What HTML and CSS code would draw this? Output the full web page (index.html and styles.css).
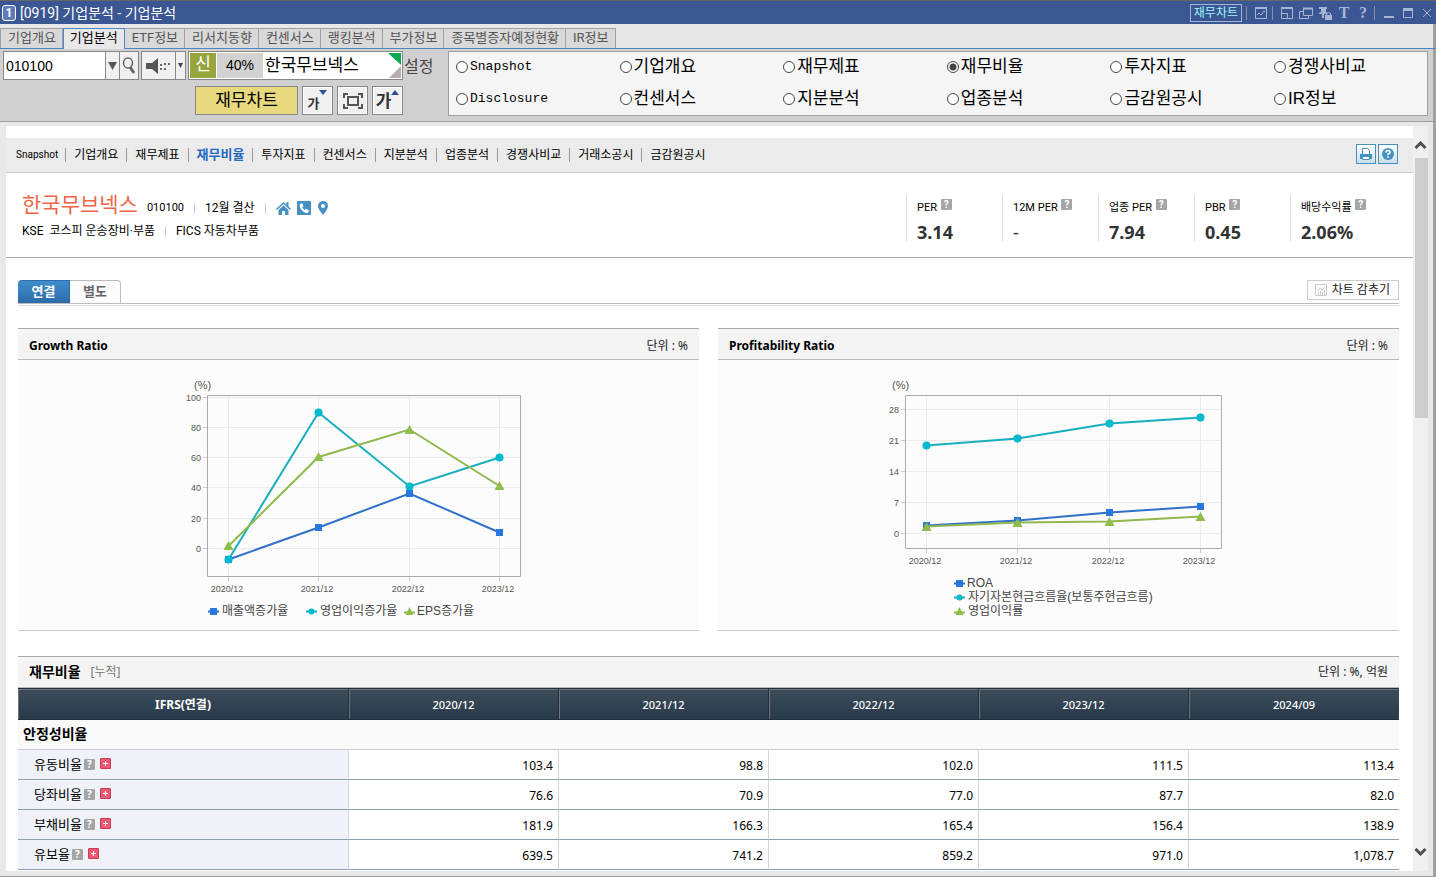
FILE: index.html
```
<!DOCTYPE html>
<html lang="ko">
<head>
    <meta charset="UTF-8">
    <meta name="viewport" content="width=device-width, initial-scale=1.0">
    <title>[0919] 기업분석 - 기업분석</title>
    <link rel="stylesheet" href="styles.css">
</head>
<body>
    <header class="titlebar">
        <span class="win-no">1</span>
        <h1>[0919] 기업분석 - 기업분석</h1>
        <div class="win-tools">
            <button class="chart-link" type="button">재무차트</button>
            <i class="bar"></i>
            <button type="button" aria-label="차트"><svg viewBox="0 0 14 14"><path d="M1.500 2v10.500h11v-10.500" /><path d="M1 2h12" stroke-width="2"/><path d="M3 9l2-2 2 2 3-4 1 1"/></svg></button>
            <i class="bar"></i>
            <button type="button" aria-label="화면 크기"><svg viewBox="0 0 14 14"><path d="M1.500 2v10.500h11v-10.500M2 7.500h5.500v5"/><path d="M1 2h12" stroke-width="2"/></svg></button>
            <button type="button" aria-label="화면 복사"><svg viewBox="0 0 14 14"><path d="M4.500 2.500h9v7h-9zM4 5.500h-3.500v7h9v-3"/><path d="M4 2.500h10" stroke-width="2"/></svg></button>
            <button type="button" aria-label="고정"><svg viewBox="0 0 14 14"><path class="fill" d="M1 1h8v2h-1v3l2 2H6v4H4V8H1V7l2-1V3H1zM7 9h7v5H7z"/><path d="M8.500 9V7.500q2-2 4 0V9"/></svg></button>
            <button type="button" class="glyph" aria-label="글꼴">T</button>
            <button type="button" class="glyph" aria-label="도움말">?</button>
            <i class="bar"></i>
            <button type="button" aria-label="최소화"><svg viewBox="0 0 14 14"><path d="M2 11h10" stroke-width="2"/></svg></button>
            <button type="button" aria-label="최대화"><svg viewBox="0 0 14 14"><path d="M2.500 3v8.500h9v-8.500"/><path d="M2 3.500h10" stroke-width="3"/></svg></button>
            <button type="button" aria-label="닫기"><svg viewBox="0 0 14 14"><path d="M3 3l8 8M11 3l-8 8"/></svg></button>
        </div>
    </header>

    <nav class="tabs">
        <a href="#">기업개요</a>
        <a href="#" class="on">기업분석</a>
        <a href="#">ETF정보</a>
        <a href="#">리서치동향</a>
        <a href="#">컨센서스</a>
        <a href="#">랭킹분석</a>
        <a href="#">부가정보</a>
        <a href="#">종목별증자예정현황</a>
        <a href="#">IR정보</a>
    </nav>

    <section class="toolbar">
        <div class="stock">
            <div class="stock-row">
                <div class="code-box">
                    <input type="text" value="010100" aria-label="종목코드">
                    <button type="button" class="drop" aria-label="종목 목록"><svg width="9" height="8" viewBox="0 0 9 8"><path d="M0 0h9L4.500 8z" fill="#555"/></svg></button>
                    <button type="button" class="find" aria-label="검색"><svg width="14" height="18" viewBox="0 0 14 18"><ellipse cx="6" cy="6" rx="4.500" ry="5" fill="none" stroke="#666" stroke-width="1.500"/><path d="M8 10l4 6" stroke="#666" stroke-width="3"/></svg></button>
                </div>
                <div class="sound">
                    <button type="button" aria-label="음성"><svg width="28" height="18" viewBox="0 0 28 18"><path d="M1 6h6l6-5v16l-6-5H1z" fill="#555"/><path d="M15 7h2v2h-2zM15 11h2v2h-2zM19 6h2v2h-2zM19 11h2v2h-2zM23 6h2v2h-2z" fill="#666"/></svg></button>
                    <button type="button" class="mini" aria-label="음성 설정"><svg width="5" height="5" viewBox="0 0 5 5"><path d="M0 0h5L2.500 5z" fill="#444"/></svg></button>
                </div>
                <div class="name-box">
                    <span class="credit">신</span>
                    <span class="rate">40%</span>
                    <span class="stock-name">한국무브넥스</span>
                    <svg width="13" height="25" viewBox="0 0 13 25"><path d="M0 0h13v12z" fill="#0aa850"/><path d="M13 13v12H1z" fill="#b5b0ae"/></svg>
                </div>
                <span class="setup">설정</span>
            </div>
            <div class="stock-row second">
                <button type="button" class="fin-chart">재무차트</button>
                <button type="button" class="sq small">가<svg width="8" height="5" viewBox="0 0 8 5"><path d="M0 0h8L4 5z" fill="#2d4f98"/></svg></button>
                <button type="button" class="sq" aria-label="화면 맞춤"><svg width="20" height="16" viewBox="0 0 20 16" fill="none" stroke="#555" stroke-width="2"><path d="M5 4h10v8H5zM1 5V1h4M15 1h4v4M19 11v4h-4M5 15H1v-4"/></svg></button>
                <button type="button" class="sq big">가<svg width="8" height="5" viewBox="0 0 8 5"><path d="M0 5h8L4 0z" fill="#2d4f98"/></svg></button>
            </div>
        </div>
        <div class="menu-box">
            <label class="latin"><input type="radio" name="menu">Snapshot</label>
            <label><input type="radio" name="menu">기업개요</label>
            <label><input type="radio" name="menu">재무제표</label>
            <label><input type="radio" name="menu" checked>재무비율</label>
            <label><input type="radio" name="menu">투자지표</label>
            <label><input type="radio" name="menu">경쟁사비교</label>
            <label class="latin"><input type="radio" name="menu">Disclosure</label>
            <label><input type="radio" name="menu">컨센서스</label>
            <label><input type="radio" name="menu">지분분석</label>
            <label><input type="radio" name="menu">업종분석</label>
            <label><input type="radio" name="menu">금감원공시</label>
            <label><input type="radio" name="menu">IR정보</label>
        </div>
    </section>

    <div class="viewer">
        <main class="page">
            <div class="gnb">
                <nav>
                    <a href="#" class="latin">Snapshot</a>
                    <a href="#">기업개요</a>
                    <a href="#">재무제표</a>
                    <a href="#" class="on">재무비율</a>
                    <a href="#">투자지표</a>
                    <a href="#">컨센서스</a>
                    <a href="#">지분분석</a>
                    <a href="#">업종분석</a>
                    <a href="#">경쟁사비교</a>
                    <a href="#">거래소공시</a>
                    <a href="#">금감원공시</a>
                </nav>
                <button type="button" aria-label="인쇄"><svg width="14" height="14" viewBox="0 0 14 14"><path d="M3.500 7V1.500h5l2 2V7" fill="#fff" stroke="#4690c2"/><path d="M1 7h12v5h-2v-2H3v2H1z" fill="#4690c2"/><path d="M3.500 9.500h7v3h-7z" fill="#fff" stroke="#4690c2"/></svg></button>
                <button type="button" aria-label="도움말"><svg width="14" height="14" viewBox="0 0 14 14"><circle cx="7" cy="7" r="6" fill="#4690c2"/><path d="M5 5.500q0-2 2-2t2 1.700q0 1-2 2v1M7 9.500v1.500" fill="none" stroke="#fff" stroke-width="1.600"/></svg></button>
            </div>

            <section class="company">
                <div class="company-info">
                    <div class="line1">
                        <h2>한국무브넥스</h2>
                        <span class="code">010100</span>
                        <i class="bar"></i>
                        <span class="month">12월 결산</span>
                        <i class="bar"></i>
                        <a href="#" aria-label="홈페이지"><svg width="15" height="14" viewBox="0 0 15 14" fill="#4690c2"><path d="M0 8l7.500-7 3 2.800V1h2v4.500L15 8l-1 1-6.500-6L1 9z"/><path d="M2.500 9l5-4.500 5 4.500v5H9v-4H6v4H2.500z"/></svg></a>
                        <a href="#" aria-label="전화"><svg width="14" height="14" viewBox="0 0 14 14"><rect width="14" height="14" rx="1" fill="#4690c2"/><path d="M3 3l2-1 1.500 3-1.200 1.200q1 2 2.600 2.800L9 7.700 12 9.500 11 12q-3 .5-6-2.500T3 3z" fill="#fff"/></svg></a>
                        <a href="#" aria-label="위치"><svg width="12" height="14" viewBox="1 0 12 14"><path d="M7 0a5 5 0 0 1 5 5q0 3-5 9Q2 8 2 5a5 5 0 0 1 5-5z" fill="#4690c2"/><circle cx="7" cy="5" r="2" fill="#fff"/></svg></a>
                    </div>
                    <div class="line2">
                        <span class="market">KSE</span>
                        <span>코스피 운송장비·부품</span>
                        <i class="bar"></i>
                        <span>FICS 자동차부품</span>
                    </div>
                </div>
                <dl class="metrics">
                    <div><dt>PER <i class="q">?</i></dt><dd>3.14</dd></div>
                    <div><dt>12M PER <i class="q">?</i></dt><dd class="none">-</dd></div>
                    <div><dt>업종 PER <i class="q">?</i></dt><dd>7.94</dd></div>
                    <div><dt>PBR <i class="q">?</i></dt><dd>0.45</dd></div>
                    <div><dt>배당수익률 <i class="q">?</i></dt><dd>2.06%</dd></div>
                </dl>
            </section>

            <div class="content">
                <div class="basis">
                    <button type="button" class="basis-tab on">연결</button>
                    <button type="button" class="basis-tab">별도</button>
                    <button type="button" class="hide-chart"><svg width="12" height="12" viewBox="0 0 12 12" fill="none" stroke="#ccc"><path d="M.5.500h11v11H.500zM2 7l3-3 2 2 3-3M3.500 8v3M5.500 7v4M7.500 8v3M9.500 6v5"/></svg>차트 감추기</button>
                </div>

                <div class="cards">
                    <section class="card">
                        <div class="card-head"><h3>Growth Ratio</h3><span>단위 : %</span></div>
                        <svg class="chart" width="361" height="270" viewBox="0 0 361 270">
                            <path class="grid" d="M30 37.500h312M30 67.500h312M30 97.500h312M30 127.500h312M30 158.500h312M30 188.500h312M50.500 36v180M140.500 36v180M231.500 36v180M321.500 36v180"/>
                            <path class="frame" d="M29.500 35.500h313v181h-313z"/>
                            <path class="tick" d="M25 37.500h4M25 67.500h4M25 97.500h4M25 127.500h4M25 158.500h4M25 188.500h4M50.500 217v4M140.500 217v4M231.500 217v4M321.500 217v4"/>
                            <g class="axis-y"><text x="23" y="41">100</text><text x="23" y="71">80</text><text x="23" y="101">60</text><text x="23" y="131">40</text><text x="23" y="162">20</text><text x="23" y="192">0</text></g>
                            <g class="axis-x"><text x="49" y="232">2020/12</text><text x="139" y="232">2021/12</text><text x="230" y="232">2022/12</text><text x="320" y="232">2023/12</text></g>
                            <text class="unit" x="16" y="29">(%)</text>
                            <g class="blue">
                                <path d="M50.500 199.500L140.500 167.500 231.500 133.500 321.500 172.500M30 251.500h11"/>
                                <path class="dot" d="M47 196h7v7h-7zM137 164h7v7h-7zM228 130h7v7h-7zM318 169h7v7h-7zM32 248h7v7h-7z"/>
                            </g>
                            <g class="cyan">
                                <path d="M50.500 199.500L140.500 52.500 231.500 126.500 321.500 97.500M128 251.500h11"/>
                                <g class="dot"><circle cx="50.500" cy="199.500" r="4"/><circle cx="140.500" cy="52.500" r="4"/><circle cx="231.500" cy="126.500" r="4"/><circle cx="321.500" cy="97.500" r="4"/><circle cx="133.500" cy="251.500" r="3"/></g>
                            </g>
                            <g class="green">
                                <path d="M50.500 186L140.500 97 231.500 69.500 321.500 126M226 252.500h11"/>
                                <path class="dot" d="M50.500 181l5 9h-10zM140.500 92l5 9h-10zM231.500 65l5 9h-10zM321.500 121l5 9h-10zM231.500 247l4 8h-8z"/>
                            </g>
                            <g class="legend"><text x="44" y="255">매출액증가율</text><text x="142" y="255">영업이익증가율</text><text x="239" y="255">EPS증가율</text></g>
                        </svg>
                    </section>
                    <section class="card">
                        <div class="card-head"><h3>Profitability Ratio</h3><span>단위 : %</span></div>
                        <svg class="chart" width="361" height="270" viewBox="0 0 361 270">
                            <path class="grid" d="M28 49.500h315M28 80.500h315M28 111.500h315M28 142.500h315M28 173.500h315M48.500 36v152M139.500 36v152M231.500 36v152M322.500 36v152"/>
                            <path class="frame" d="M27.500 35.500h316v153h-316z"/>
                            <path class="tick" d="M23 49.500h4M23 80.500h4M23 111.500h4M23 142.500h4M23 173.500h4M48.500 189v4M139.500 189v4M231.500 189v4M322.500 189v4"/>
                            <g class="axis-y"><text x="21" y="53">28</text><text x="21" y="84">21</text><text x="21" y="115">14</text><text x="21" y="146">7</text><text x="21" y="177">0</text></g>
                            <g class="axis-x"><text x="47" y="204">2020/12</text><text x="138" y="204">2021/12</text><text x="230" y="204">2022/12</text><text x="321" y="204">2023/12</text></g>
                            <text class="unit" x="14" y="29">(%)</text>
                            <g class="blue">
                                <path d="M48.500 165.500L139.500 160.500 231.500 152.500 322.500 146.500M76 223.500h11"/>
                                <path class="dot" d="M45 162h7v7h-7zM136 157h7v7h-7zM228 149h7v7h-7zM319 143h7v7h-7zM78 220h7v7h-7z"/>
                            </g>
                            <g class="cyan">
                                <path d="M48.500 85.500L139.500 78.500 231.500 63.500 322.500 57.500M76 237.500h11"/>
                                <g class="dot"><circle cx="48.500" cy="85.500" r="4"/><circle cx="139.500" cy="78.500" r="4"/><circle cx="231.500" cy="63.500" r="4"/><circle cx="322.500" cy="57.500" r="4"/><circle cx="81.500" cy="237.500" r="3"/></g>
                            </g>
                            <g class="green">
                                <path d="M48.500 166.500L139.500 162.500 231.500 161.500 322.500 156.500M76 252.500h11"/>
                                <path class="dot" d="M48.500 162l5 9h-10zM139.500 158l5 9h-10zM231.500 157l5 9h-10zM322.500 152l5 9h-10zM81.500 247l4 8h-8z"/>
                            </g>
                            <g class="legend"><text x="89" y="227">ROA</text><text x="90" y="241">자기자본현금흐름율(보통주현금흐름)</text><text x="90" y="255">영업이익률</text></g>
                        </svg>
                    </section>
                </div>

                <section class="ratio">
                    <div class="card-head"><h3>재무비율</h3><em>[누적]</em><span>단위 : %, 억원</span></div>
                    <table>
                        <thead>
                            <tr><th class="first">IFRS(연결)</th><th>2020/12</th><th>2021/12</th><th>2022/12</th><th>2023/12</th><th>2024/09</th></tr>
                        </thead>
                        <tbody>
                            <tr class="group"><th colspan="6">안정성비율</th></tr>
                            <tr><th>유동비율<i class="q">?</i><button type="button" class="plus" aria-label="펼치기"></button></th><td>103.4</td><td>98.8</td><td>102.0</td><td>111.5</td><td>113.4</td></tr>
                            <tr><th>당좌비율<i class="q">?</i><button type="button" class="plus" aria-label="펼치기"></button></th><td>76.6</td><td>70.9</td><td>77.0</td><td>87.7</td><td>82.0</td></tr>
                            <tr><th>부채비율<i class="q">?</i><button type="button" class="plus" aria-label="펼치기"></button></th><td>181.9</td><td>166.3</td><td>165.4</td><td>156.4</td><td>138.9</td></tr>
                            <tr><th>유보율<i class="q">?</i><button type="button" class="plus" aria-label="펼치기"></button></th><td>639.5</td><td>741.2</td><td>859.2</td><td>971.0</td><td>1,078.7</td></tr>
                        </tbody>
                    </table>
                </section>
            </div>
        </main>
        <div class="scrollbar">
            <svg width="13" height="8" viewBox="0 0 13 8"><path d="M1.500 7l5-5 5 5" fill="none" stroke="#505050" stroke-width="3"/></svg>
            <div class="thumb"></div>
            <svg width="13" height="8" viewBox="0 0 13 8"><path d="M1.500 1l5 5 5-5" fill="none" stroke="#505050" stroke-width="3"/></svg>
        </div>
    </div>
</body>
</html>
```
FILE: styles.css
```
* {
    margin: 0;
    padding: 0;
    box-sizing: border-box;
}

body {
    display: flex;
    flex-direction: column;
    height: 100vh;
    overflow: hidden;
    background: #e8e8e8;
    border-bottom: 1px solid #a0a0a0;
    font-family: "Noto Sans", "Noto Sans CJK KR", sans-serif;
    font-size: 12px;
    line-height: 16px;
    color: #000;
}

button, input {
    font: inherit;
    color: inherit;
    border: none;
    background: none;
}

button {
    cursor: pointer;
}

a {
    color: inherit;
    text-decoration: none;
}

/* title bar */
.titlebar {
    display: flex;
    align-items: center;
    flex: none;
    height: 24px;
    padding: 0 2px;
    background: #3a5693;
    border-top: 1px solid #666;
    color: #fff;
    font-family: Roboto, "Noto Sans CJK KR", sans-serif;
}

.win-no {
    width: 14px;
    height: 16px;
    margin-right: 4px;
    border: 1px solid #fff;
    border-radius: 3px;
    background: #5f7bb8;
    font-size: 12px;
    font-weight: bold;
    line-height: 14px;
    text-align: center;
}

.titlebar h1 {
    flex: 1;
    font-size: 14px;
    font-weight: normal;
    line-height: 20px;
}

.win-tools {
    display: flex;
    align-items: center;
    gap: 5px;
    color: #a8b4d6;
}

.win-tools svg {
    display: block;
    width: 14px;
    height: 14px;
    fill: none;
    stroke: currentColor;
}

.win-tools svg .fill {
    fill: currentColor;
    stroke: none;
}

.win-tools .bar {
    width: 1px;
    height: 14px;
    margin: 0 2px 0 -1px;
    background: #8c8f9c;
}

.win-tools .chart-link {
    height: 18px;
    padding: 0 3px;
    border: 1px solid #a8b4d6;
    color: #9ff5ff;
    line-height: 16px;
}

.win-tools .glyph {
    width: 14px;
    font-family: "Liberation Serif", serif;
    font-size: 16px;
    font-weight: bold;
}

/* window edge on the right */
.tabs, .toolbar, .viewer {
    box-shadow: inset -3px 0 #a0a0a0;
}

/* screen tabs */
.tabs {
    display: flex;
    flex: none;
    height: 25px;
    padding-top: 4px;
    border-bottom: 1px solid #4f86c2;
    font-family: Roboto, "Noto Sans CJK KR", sans-serif;
    font-size: 13px;
    line-height: 18px;
    color: #555;
}

.tabs a {
    height: 20px;
    padding: 0 6px 0 7px;
    background: #d9d9d9;
    border: 1px solid #a0a0a0;
    border-width: 1px 1px 0 0;
}

.tabs a:first-child {
    border-left-width: 1px;
}

.tabs a.on {
    height: 21px;
    padding: 0 6px;
    background: #e8e8e8;
    border: 1px solid #4f86c2;
    border-bottom: none;
    color: #000;
}

/* toolbar */
.toolbar {
    display: flex;
    flex: none;
    height: 73px;
    padding: 2px 8px 0 3px;
    background: #d0d0d0;
    border-bottom: 1px solid #a0a0a0;
    font-family: "Liberation Sans", "Noto Sans CJK KR", sans-serif;
}

.stock {
    flex: none;
    width: 445px;
}

.stock-row {
    display: flex;
    gap: 2px;
    height: 29px;
}

.stock-row.second {
    gap: 4px;
    margin-top: 6px;
    padding-left: 192px;
}

.code-box, .sound, .name-box {
    display: flex;
    flex: none;
    background: #fff;
    border: 1px solid #888;
}

.code-box input {
    width: 101px;
    padding: 0 2px;
    font-size: 14px;
}

.code-box button, .sound button {
    display: flex;
    align-items: center;
    justify-content: center;
    background: #f0f0f0;
    border-left: 1px solid #888;
}

.code-box .drop {
    width: 14px;
}

.code-box .find {
    width: 19px;
}

.sound button:first-child {
    width: 33px;
    border-left: none;
}

.sound .mini {
    width: 10px;
}

.name-box {
    width: 215px;
    padding: 1px;
    font-size: 17px;
    line-height: 24px;
}

.credit {
    width: 26px;
    background: #98a43c;
    color: #fff;
    text-align: center;
}

.rate {
    width: 46px;
    margin-left: 1px;
    background: #d2d2d2;
    font-size: 14px;
    text-align: center;
}

.stock-name {
    flex: 1;
    padding-left: 2px;
    line-height: 26px;
}

.name-box svg {
    display: block;
}

.setup {
    margin-left: -1px;
    font-size: 16px;
    line-height: 32px;
    color: #444;
}

.fin-chart {
    width: 103px;
    background: #e8d87e;
    border: 1px solid #888;
    font-size: 17px;
}

.sq {
    display: flex;
    align-items: center;
    justify-content: center;
    width: 31px;
    background: #f0f0f0;
    border: 1px solid #888;
    outline: 1px solid #fff;
    outline-offset: -2px;
    color: #333;
    font-weight: bold;
}

.sq.small, .sq.big {
    align-items: flex-start;
    padding-top: 3px;
}

.sq.small {
    font-size: 13px;
    line-height: 28px;
}

.sq.big {
    font-size: 17px;
    line-height: 24px;
}

.menu-box {
    display: grid;
    grid-template-columns: repeat(5, 1fr) 153px;
    grid-auto-rows: 30px;
    row-gap: 2px;
    flex: 1;
    height: 65px;
    padding-left: 7px;
    background: #f5f5f5;
    border: 1px solid #a0a0a0;
    font-size: 17px;
}

.menu-box label {
    display: flex;
    align-items: center;
    gap: 2px;
}

.menu-box .latin {
    font-family: "Liberation Mono", monospace;
    font-size: 13px;
}

.menu-box input {
    appearance: none;
    width: 12px;
    height: 12px;
    background: #fff;
    border: 1px solid #444;
    border-radius: 50%;
}

.menu-box input:checked {
    background: radial-gradient(#444 0 3px, #fff 4px);
}

/* embedded page */
.viewer {
    display: flex;
    flex: 1;
    min-height: 0;
    padding: 4px 8px 5px 6px;
}

.page {
    flex: 1;
    padding-top: 12px;
    overflow: hidden;
    background: #fff;
}

.gnb {
    display: flex;
    align-items: center;
    gap: 2px;
    height: 35px;
    padding: 0 15px 0 2px;
    background: #ebebeb;
    border-bottom: 1px solid #ccc;
}

.gnb nav {
    display: flex;
    flex: 1;
    align-items: center;
    font-family: Roboto, "Noto Sans CJK KR", sans-serif;
}

.gnb a {
    padding: 0 8px;
    border-left: 1px solid #999;
    line-height: 14px;
}

.gnb a.latin {
    padding-right: 7px;
    border-left: none;
    font-size: 10px;
}

.gnb a.on {
    color: #2469c0;
    font-size: 13px;
    font-weight: bold;
}

.gnb button {
    display: flex;
    align-items: center;
    justify-content: center;
    width: 20px;
    height: 20px;
    margin-bottom: 2px;
    background: linear-gradient(#fff, #c8dde8);
    border: 1px solid #4690c2;
}

.company {
    display: flex;
    height: 85px;
    padding: 22px 27px 0 16px;
    border-bottom: 1px solid #aaa;
    font-family: Roboto, "Noto Sans CJK KR", sans-serif;
}

.company-info {
    flex: 1;
}

.line1, .line2 {
    display: flex;
    align-items: center;
}

.line1 {
    height: 26px;
}

.line2 {
    height: 20px;
}

.line1 h2 {
    margin: -6px 9px 0 0;
    color: #f06548;
    font-size: 21px;
    font-weight: normal;
    line-height: 26px;
}

.code {
    font-size: 11px;
}

.line1 a {
    margin-right: 6px;
}

.line1 svg {
    display: block;
}

.company .bar {
    width: 1px;
    height: 11px;
    margin: 0 10px;
    background: #ccc;
}

.market {
    margin-right: 6px;
}

.metrics {
    display: flex;
    height: 46px;
}

.metrics div {
    width: 96px;
    padding-left: 10px;
    border-left: 1px solid #ddd;
}

.metrics dt {
    padding-top: 4px;
    font-size: 11px;
    line-height: 18px;
    white-space: nowrap;
}

.metrics dd {
    padding-top: 3px;
    color: #333;
    font-family: "Noto Sans", sans-serif;
    font-size: 18px;
    font-weight: bold;
    line-height: 24px;
}

.metrics dd.none {
    font-weight: normal;
}

.q {
    display: inline-block;
    width: 11px;
    height: 11px;
    background: #a5a5a5;
    border-radius: 1px;
    color: #fff;
    font-size: 10px;
    font-style: normal;
    font-weight: bold;
    line-height: 11px;
    text-align: center;
    vertical-align: 1px;
}

.metrics .q {
    margin-left: 1px;
    vertical-align: 3px;
}

.content {
    padding: 22px 14px 0 12px;
}

.basis {
    display: flex;
    height: 26px;
    border-bottom: 1px solid #ddd;
    background: linear-gradient(#bbb, #bbb) 0 23px / 100% 1px no-repeat;
}

.basis-tab {
    width: 51px;
    height: 23px;
    padding-bottom: 3px;
    background: #fcfcfc;
    border: 1px solid #bbb;
    border-width: 1px 1px 0 0;
    border-radius: 0 4px 0 0;
    color: #666;
    font-size: 13px;
    font-weight: bold;
    line-height: 18px;
}

.basis-tab.on {
    width: 52px;
    background: linear-gradient(#3f8ccc, #2c6ca8);
    border-color: #2c6ca8;
    border-radius: 4px 0 0 0;
    color: #fff;
}

.hide-chart {
    display: flex;
    align-items: center;
    gap: 5px;
    height: 20px;
    margin-left: auto;
    padding: 0 8px 0 7px;
    background: #fcfcfc;
    border: 1px solid #ccc;
    color: #222;
}

.cards {
    display: grid;
    grid-template-columns: 1fr 1fr;
    gap: 19px;
    margin-top: 22px;
}

.card {
    background: #fcfcfc;
    border-bottom: 1px solid #ccc;
}

.card-head {
    display: flex;
    align-items: center;
    height: 32px;
    padding: 0 11px;
    background: #f4f4f4;
    border-top: 1px solid #aaa;
    border-bottom: 1px solid #bbb;
}

.card .card-head {
    padding-top: 3px;
}

.card-head h3 {
    font-size: 12px;
}

.card-head span {
    margin-left: auto;
    color: #222;
}

.chart {
    display: block;
    margin: 0 auto;
    font-family: "Liberation Sans", "Noto Sans CJK KR", sans-serif;
    font-size: 9px;
    fill: #555;
}

.grid, .frame, .tick {
    fill: none;
    stroke: #ebebeb;
}

.frame {
    stroke: #aaa;
}

.tick {
    stroke: #ccc;
}

.axis-y {
    text-anchor: end;
}

.axis-x {
    text-anchor: middle;
}

.unit {
    font-size: 11px;
}

.legend {
    font-size: 12px;
    fill: #444;
}

.blue, .cyan, .green {
    fill: none;
    stroke-width: 2;
}

.blue {
    stroke: #2f70c8;
}

.cyan {
    stroke: #18aebf;
}

.green {
    stroke: #8fb94e;
}

.chart .dot {
    stroke: none;
}

.blue .dot {
    fill: #2877dc;
}

.cyan .dot {
    fill: #00b9cc;
}

.green .dot {
    fill: #8fbc4a;
}

/* ratio table */
.ratio {
    margin-top: 25px;
}

.ratio .card-head h3 {
    font-size: 14px;
}

.ratio .card-head em {
    margin-left: 10px;
    color: #777;
    font-style: normal;
}

table {
    width: 100%;
    border-collapse: separate;
    border-spacing: 0;
    table-layout: fixed;
}

thead th {
    width: 210px;
    height: 32px;
    padding-top: 2px;
    background: linear-gradient(#3d4c5a, #293a4b);
    border-top: 1px solid #222d38;
    border-bottom: 1px solid #222d38;
    box-shadow: inset 1px 1px #6b7781;
    border-right: 1px solid #222d38;
    color: #fff;
    font-size: 11px;
    font-weight: 500;
}

thead th:last-child {
    border-right: none;
}

thead .first {
    width: auto;
    font-size: 12px;
    font-weight: bold;
}

tbody th, tbody td {
    height: 30px;
    border-bottom: 1px solid #8fa0ac;
}

tbody th {
    padding: 0 0 2px 16px;
    background: #eff2f8;
    border-right: 1px solid #d5d8dc;
    font-size: 13px;
    font-weight: normal;
    text-align: left;
}

tbody td {
    padding: 2px 5px 0 0;
    border-right: 1px solid #d5d5d5;
    text-align: right;
}

tbody td:last-child {
    border-right: none;
}

.group th {
    padding-left: 5px;
    background: #f9f9f9;
    border-bottom-color: #ccc;
    border-right: none;
    font-size: 14px;
    font-weight: bold;
}

tbody .q {
    margin-left: 2px;
}

.plus {
    width: 11px;
    height: 11px;
    margin-left: 5px;
    border: 1px solid #c93a56;
    border-radius: 1px;
    background: linear-gradient(#fff, #fff) center / 5px 1px no-repeat, linear-gradient(#fff, #fff) center / 1px 5px no-repeat, #ee5872;
    vertical-align: 1px;
}

.scrollbar {
    display: flex;
    flex-direction: column;
    align-items: center;
    width: 15px;
    padding: 15px 0;
    background: #f0f0f0;
}

.thumb {
    width: 13px;
    height: 260px;
    margin: 9px 0 auto 2px;
    background: #cdcdcd;
}
```
